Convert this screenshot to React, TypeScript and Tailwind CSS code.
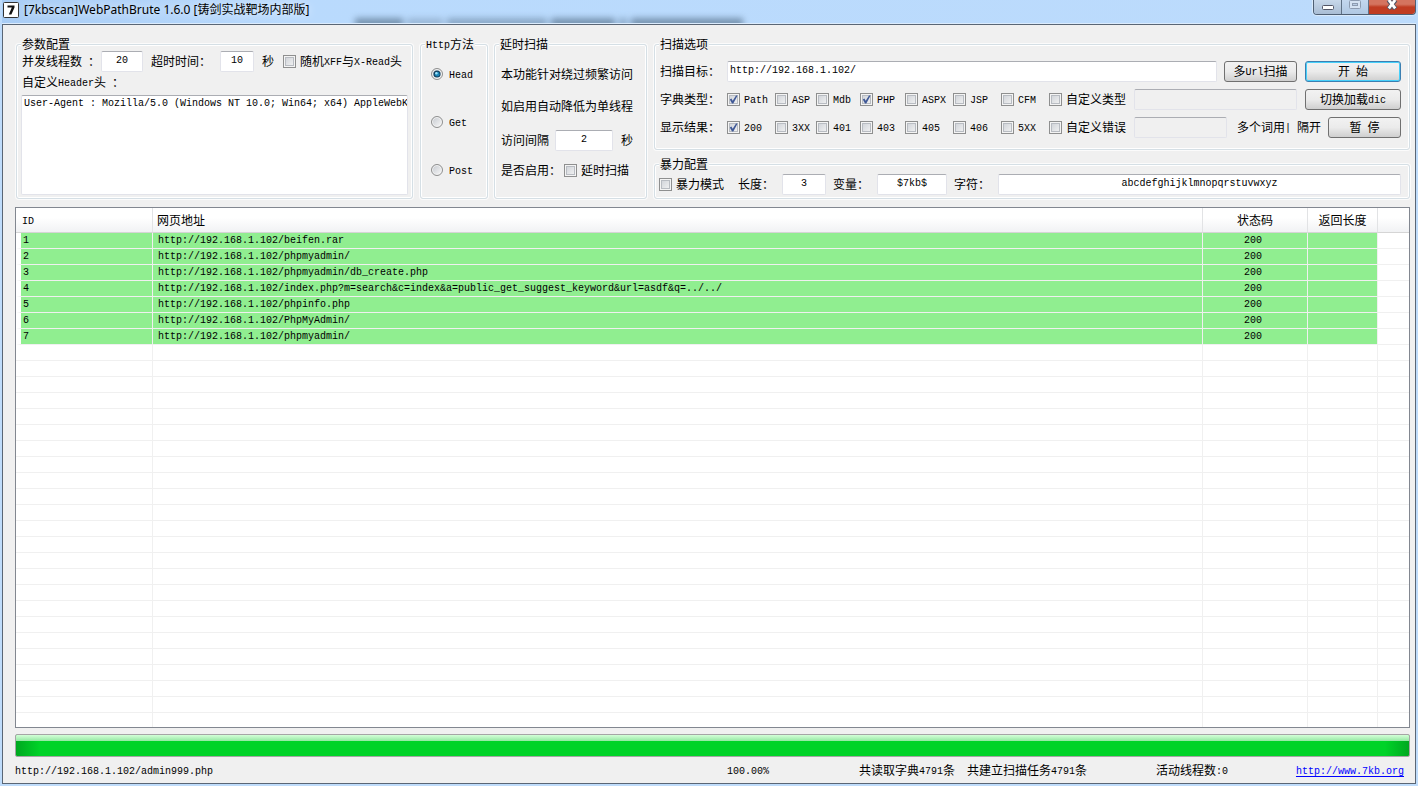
import { Fragment, ReactNode } from "react";

const results = [
  { id: 1, url: "http://192.168.1.102/beifen.rar", status: 200 },
  { id: 2, url: "http://192.168.1.102/phpmyadmin/", status: 200 },
  { id: 3, url: "http://192.168.1.102/phpmyadmin/db_create.php", status: 200 },
  {
    id: 4,
    url: "http://192.168.1.102/index.php?m=search&c=index&a=public_get_suggest_keyword&url=asdf&q=../../",
    status: 200,
  },
  { id: 5, url: "http://192.168.1.102/phpinfo.php", status: 200 },
  { id: 6, url: "http://192.168.1.102/PhpMyAdmin/", status: 200 },
  { id: 7, url: "http://192.168.1.102/phpmyadmin/", status: 200 },
];

const EMPTY_ROWS = 23;

const MONO = "font-['Liberation_Mono','Noto_Sans_CJK_SC',monospace] text-[10px]";

const dictTypes = [
  { label: "Path", width: "w-[48px]", checked: true },
  { label: "ASP", width: "w-[41px]", checked: false },
  { label: "Mdb", width: "w-[44px]", checked: false },
  { label: "PHP", width: "w-[45px]", checked: true },
  { label: "ASPX", width: "w-[48px]", checked: false },
  { label: "JSP", width: "w-[48px]", checked: false },
  { label: "CFM", width: "w-[48px]", checked: false },
];

const statusTypes = [
  { label: "200", width: "w-[48px]", checked: true },
  { label: "3XX", width: "w-[41px]", checked: false },
  { label: "401", width: "w-[44px]", checked: false },
  { label: "403", width: "w-[45px]", checked: false },
  { label: "405", width: "w-[48px]", checked: false },
  { label: "406", width: "w-[48px]", checked: false },
  { label: "5XX", width: "w-[48px]", checked: false },
];

// Latin runs are half as wide as a Chinese character
function Mixed({ text }: { text: string }) {
  return (
    <>
      {text.split(/([\x20-\x7e]+)/).map((part, i) =>
        i % 2 ? (
          <span key={i} className={`${MONO} align-[1px] leading-3 whitespace-pre`}>
            {part}
          </span>
        ) : (
          <Fragment key={i}>{part}</Fragment>
        )
      )}
    </>
  );
}

function Group({ title, className, children }: { title: string; className: string; children: ReactNode }) {
  return (
    <fieldset
      className={`min-w-0 rounded-[3px] border border-[#d5dfe5] px-1 shadow-[inset_0_0_0_1px_#fff,0_0_0_1px_#fbfbfb] ${className}`}
    >
      <legend className="h-3 bg-[#f0f0f0] px-px leading-3">
        <Mixed text={title} />
      </legend>
      {children}
    </fieldset>
  );
}

function Check({
  label,
  className = "",
  checked = false,
}: {
  label: string;
  className?: string;
  checked?: boolean;
}) {
  return (
    <label className={`flex shrink-0 items-center gap-1 whitespace-nowrap ${className}`}>
      <span className="grid shrink-0">
        <input
          type="checkbox"
          defaultChecked={checked}
          className="peer col-start-1 row-start-1 size-[13px] appearance-none border border-[#8e8f8f] bg-linear-to-br from-[#cbcfd5] to-[#f6f6f6] shadow-[inset_0_0_0_1px_#f4f4f4,inset_0_0_0_2px_#b8bcc2]"
        />
        <svg
          viewBox="0 0 13 13"
          className="pointer-events-none col-start-1 row-start-1 hidden size-[13px] peer-checked:block"
        >
          <path d="M2.8 6.4 L4.4 5.6 L5.7 7.8 L9 2.4 L10.6 2.6 L6.3 10.6 L5 10.6 Z" fill="#3f5896" />
        </svg>
      </span>
      <span>
        <Mixed text={label} />
      </span>
    </label>
  );
}

function Radio({ label, checked = false }: { label: string; checked?: boolean }) {
  return (
    <label className="flex h-12 items-center gap-1.5 pl-1.5">
      <span className="grid shrink-0">
        <input
          type="radio"
          name="method"
          defaultChecked={checked}
          className="peer col-start-1 row-start-1 size-3 appearance-none rounded-full border border-[#8e8f8f] bg-linear-to-br from-[#c4c8ce] to-[#fafafa] shadow-[inset_0_0_0_1px_#f4f4f4]"
        />
        <svg
          viewBox="0 0 12 12"
          className="pointer-events-none col-start-1 row-start-1 hidden size-3 peer-checked:block"
        >
          <circle cx="6" cy="6" r="3.6" fill="#14405f" />
          <circle cx="6.2" cy="6.2" r="2.4" fill="#1c86b8" />
          <circle cx="5.4" cy="5.2" r="1.2" fill="#9fe3fa" />
        </svg>
      </span>
      <span>
        <Mixed text={label} />
      </span>
    </label>
  );
}

function TextBox({
  label,
  value = "",
  className,
  disabled = false,
}: {
  label: string;
  value?: string;
  className: string;
  disabled?: boolean;
}) {
  return (
    <input
      type="text"
      aria-label={label}
      defaultValue={value}
      disabled={disabled}
      className={`${MONO} h-[21px] min-w-0 rounded-[2px] border border-[#e2e3ea] border-t-[#abadb3] bg-white pb-0.5 disabled:bg-[#f0f0f0] ${className}`}
    />
  );
}

function Button({ text, className }: { text: string; className: string }) {
  return (
    <button
      type="button"
      className={`h-[21px] shrink-0 rounded-[3px] border bg-linear-to-b from-[#f2f2f2] from-0% via-[#ebebeb] via-50% to-[#cfcfcf] whitespace-pre ${className}`}
    >
      <Mixed text={text} />
    </button>
  );
}

function TitleBar() {
  return (
    <header className="relative flex h-6 items-start overflow-hidden border-b border-[#dcecfd] bg-linear-to-r from-[#a9cdf5] via-[#b9dafd] via-20% to-[#bcdbfc] pl-px">
      {/* page text behind the glass frame */}
      <div className="absolute top-[18px] left-[353px] flex gap-1 opacity-60 blur-[3px]">
        <span className="h-2.5 w-12 bg-[#4c667f]" />
        <span className="h-2.5 w-9 bg-[#86a2bf]" />
        <span className="h-2.5 w-[100px] bg-[#6c88a4]" />
        <span className="h-2.5 w-16 bg-[#4c667f]" />
        <span className="h-2.5 w-2 bg-[#6c88a4]" />
        <span className="h-2.5 w-28 bg-[#4c667f]" />
      </div>
      <svg viewBox="0 0 16 16" className="mt-0.5 size-4">
        <rect x="0.5" y="0.5" width="15" height="15" rx="1" fill="#fff" stroke="#333" />
        <path d="M4.5 3.5 H11.5 V5.5 L8.4 12.5 H5.8 L8.8 5.6 H4.5 Z" fill="#111" />
      </svg>
      <h1 className="ml-[5px] font-['Noto_Sans','Noto_Sans_CJK_SC',sans-serif] text-[12px] leading-5 [text-shadow:0_0_8px_#fff]">
        [7kbscan]WebPathBrute 1.6.0 [铸剑实战靶场内部版]
      </h1>
      <div className="ml-auto flex h-[15px] rounded-b-[4px] border border-t-0 border-[#4f5f73] shadow-[0_0_1px_1px_#dcebfb]">
        <button
          type="button"
          aria-label="最小化"
          className="flex w-7 justify-center rounded-bl-[3px] border-r border-[#5f7186] bg-linear-to-b from-[#c8d8ea] to-[#a9bdd4]"
        >
          <svg viewBox="0 0 12 10" className="mt-px h-2.5 w-3">
            <rect x="0.5" y="4.5" width="11" height="4" rx="1" fill="#fff" stroke="#535666" />
          </svg>
        </button>
        <button
          type="button"
          aria-label="最大化"
          disabled
          className="flex w-[27px] justify-center border-r border-[#5f7186] bg-linear-to-b from-[#c3d7ee] to-[#b0c8e3]"
        >
          <svg viewBox="0 0 12 10" className="h-2.5 w-3">
            <rect x="0.5" y="0.5" width="11" height="8" rx="1" fill="#d4e2f2" stroke="#8c9bb0" />
            <rect x="3.5" y="3.5" width="5" height="2" fill="#b9cde5" stroke="#8c9bb0" />
          </svg>
        </button>
        <button
          type="button"
          aria-label="关闭"
          className="flex w-[46px] justify-center rounded-br-[3px] bg-linear-to-b from-[#d4745f] from-30% to-[#c03c22] to-50%"
        >
          <svg viewBox="0 0 12 10" className="h-2.5 w-3">
            <path d="M2.5 0 L9.5 9 M9.5 0 L2.5 9" stroke="#535666" strokeWidth="4.6" />
            <path d="M2.8 0 L9.2 8.4 M9.2 0 L2.8 8.4" stroke="#fff" strokeWidth="2.8" />
          </svg>
        </button>
      </div>
    </header>
  );
}

function ResultTable() {
  const th =
    "h-[25px] border-r border-b border-r-[#e2e3e5] border-b-[#d5d5d5] bg-linear-to-b from-white from-40% to-[#f1f2f4] p-0 font-normal";
  const td = "border-r border-b border-[#f0f0f0] p-0 leading-3";

  return (
    <div className="mt-2 flex-1 overflow-hidden border border-[#828790] bg-white">
      <table className="w-full table-fixed border-separate border-spacing-0">
        <colgroup>
          <col className="w-[137px]" />
          <col />
          <col className="w-[105px]" />
          <col className="w-[70px]" />
          <col className="w-[31px]" />
        </colgroup>
        <thead>
          <tr>
            <th className={`${th} pl-1.5 text-left`}>
              <Mixed text="ID" />
            </th>
            <th className={`${th} pl-1 text-left`}>网页地址</th>
            <th className={`${th} text-center`}>状态码</th>
            <th className={`${th} text-center`}>返回长度</th>
            <th className={`${th} border-r-0`} />
          </tr>
        </thead>
        <tbody className={MONO}>
          {results.map((row) => (
            <tr key={row.id} className="h-4">
              <td className={`${td} border-l-[5px] border-l-white bg-[#90ee90] pl-0.5`}>{row.id}</td>
              <td className={`${td} truncate bg-[#90ee90] pl-[5px]`}>{row.url}</td>
              <td className={`${td} bg-[#90ee90] pr-1 text-center`}>{row.status}</td>
              <td className={`${td} bg-[#90ee90]`} />
              <td className={`${td} border-r-0`} />
            </tr>
          ))}
          {Array.from({ length: EMPTY_ROWS }, (_, i) => (
            <tr key={i} className="h-4">
              <td className={td} />
              <td className={td} />
              <td className={td} />
              <td className={td} />
              <td className={`${td} border-r-0`} />
            </tr>
          ))}
          {/* last row is cut off by the list's edge */}
          <tr className="h-[14px]">
            <td className={`${td} border-b-0`} />
            <td className={`${td} border-b-0`} />
            <td className={`${td} border-b-0`} />
            <td className={`${td} border-b-0`} />
            <td />
          </tr>
        </tbody>
      </table>
    </div>
  );
}

export default function App() {
  return (
    <div className="flex min-h-screen flex-col bg-[#bfdcfb] px-0.5 pb-0.5 font-['Noto_Sans_CJK_SC',sans-serif] text-[12px] leading-4 text-black">
      <TitleBar />
      <main className="flex flex-1 flex-col border border-[#5a6675] bg-[#f0f0f0] pt-[13px] pr-[5px] pl-3">
        <div className="flex">
          {/* Request parameters */}
          <Group title="参数配置" className="ml-px w-[397px] shrink-0">
            <div className="flex h-[22px] items-center pl-px whitespace-nowrap">
              <span className="w-[79px]">
                <Mixed text="并发线程数 ：" />
              </span>
              <TextBox label="并发线程数" value="20" className="w-[42px] text-center" />
              <span className="ml-2 w-[69px]">超时时间：</span>
              <TextBox label="超时时间" value="10" className="w-[34px] text-center" />
              <span className="ml-2 w-[21px]">秒</span>
              <Check label="随机XFF与X-Read头" />
            </div>
            <label htmlFor="header" className="block h-[23px] pl-px leading-5">
              <Mixed text="自定义Header头 ：" />
            </label>
            <textarea
              id="header"
              wrap="off"
              defaultValue="User-Agent : Mozilla/5.0 (Windows NT 10.0; Win64; x64) AppleWebKit/537.36 (KHTML, like Gecko)"
              className={`${MONO} block h-[100px] w-full resize-none overflow-hidden rounded-[2px] border border-[#e2e3ea] border-t-[#abadb3] bg-white px-0.5 leading-4`}
            />
          </Group>

          {/* Request method */}
          <Group title="Http方法" className="ml-[7px] w-[68px] shrink-0">
            <Radio label="Head" checked />
            <Radio label="Get" />
            <Radio label="Post" />
          </Group>

          {/* Delayed scan */}
          <Group title="延时扫描" className="ml-1.5 w-[153px] shrink-0 whitespace-nowrap">
            <div className="pt-2 pl-0.5">
              <p className="h-8 leading-8">本功能针对绕过频繁访问</p>
              <p className="h-8 leading-8">如启用自动降低为单线程</p>
              <div className="flex h-9 items-center">
                <span className="w-[54px]">访问间隔</span>
                <TextBox label="访问间隔" value="2" className="w-[58px] text-center" />
                <span className="ml-2">秒</span>
              </div>
              <div className="flex h-6 items-center">
                <span className="w-[63px]">是否启用：</span>
                <Check label="延时扫描" />
              </div>
            </div>
          </Group>

          <div className="ml-[7px] flex min-w-0 flex-1 flex-col whitespace-nowrap">
            {/* Scan options */}
            <Group title="扫描选项" className="pt-[7px] pb-2">
              <div className="flex h-7 items-center pr-1">
                <span className="w-[68px] shrink-0 pl-px">扫描目标：</span>
                <TextBox label="扫描目标" value="http://192.168.1.102/" className="flex-1 pl-0.5" />
                <Button text="多Url扫描" className="ml-[7px] w-[73px] border-[#707070]" />
                <Button
                  text="开 始"
                  className="ml-2 w-24 border-[#3c7fb1] shadow-[inset_0_0_0_1px_#46d0fa]"
                />
              </div>
              <div className="flex h-7 items-center pr-1">
                <span className="w-[68px] shrink-0 pl-px">字典类型：</span>
                {dictTypes.map((type) => (
                  <Check key={type.label} label={type.label} checked={type.checked} className={type.width} />
                ))}
                <Check label="自定义类型" className="w-[85px]" />
                <TextBox label="自定义类型" disabled className="flex-1" />
                <Button text="切换加载dic" className="ml-2 w-24 border-[#707070]" />
              </div>
              <div className="flex h-7 items-center pr-1">
                <span className="w-[68px] shrink-0 pl-px">显示结果：</span>
                {statusTypes.map((type) => (
                  <Check key={type.label} label={type.label} checked={type.checked} className={type.width} />
                ))}
                <Check label="自定义错误" className="w-[85px]" />
                <TextBox label="自定义错误" disabled className="flex-1" />
                <span className="mr-[7px] ml-2.5 shrink-0">
                  <Mixed text="多个词用| 隔开" />
                </span>
                <Button text="暂 停" className="w-[73px] border-[#707070]" />
              </div>
            </Group>

            {/* Brute force */}
            <Group title="暴力配置" className="mt-2">
              <div className="flex h-7 items-center pr-1">
                <Check label="暴力模式" className="w-[79px]" />
                <span className="w-11 shrink-0">长度：</span>
                <TextBox label="长度" value="3" className="w-11 text-center" />
                <span className="ml-[7px] w-11 shrink-0">变量：</span>
                <TextBox label="变量" value="$7kb$" className="w-[70px] text-center" />
                <span className="ml-[7px] w-11 shrink-0">字符：</span>
                <TextBox label="字符" value="abcdefghijklmnopqrstuvwxyz" className="flex-1 text-center" />
              </div>
            </Group>
          </div>
        </div>

        <ResultTable />

        <div
          role="progressbar"
          aria-label="扫描进度"
          aria-valuenow={100}
          className="mt-1.5 h-[23px] overflow-hidden rounded-[2px] border border-[#a5a5a5]"
        >
          <div className="h-full bg-[linear-gradient(to_right,#00a820,#00d328_24px,#00d328_calc(100%-24px),#00a820)]">
            <div className="h-1.5 bg-linear-to-b from-[#d3ffd8] to-[#93e8a2]" />
          </div>
        </div>

        <footer className="flex h-[26px] items-center whitespace-nowrap">
          <span className="min-w-0 flex-1">
            <Mixed text="http://192.168.1.102/admin999.php" />
          </span>
          <span className="w-[132px]">
            <Mixed text="100.00%" />
          </span>
          <span className="w-[108px]">
            <Mixed text="共读取字典4791条" />
          </span>
          <span className="w-[189px]">
            <Mixed text="共建立扫描任务4791条" />
          </span>
          <span className="w-[140px]">
            <Mixed text="活动线程数:0" />
          </span>
          <a href="http://www.7kb.org" className="mr-1.5 text-[#0000ff] underline">
            <Mixed text="http://www.7kb.org" />
          </a>
        </footer>
      </main>
    </div>
  );
}
